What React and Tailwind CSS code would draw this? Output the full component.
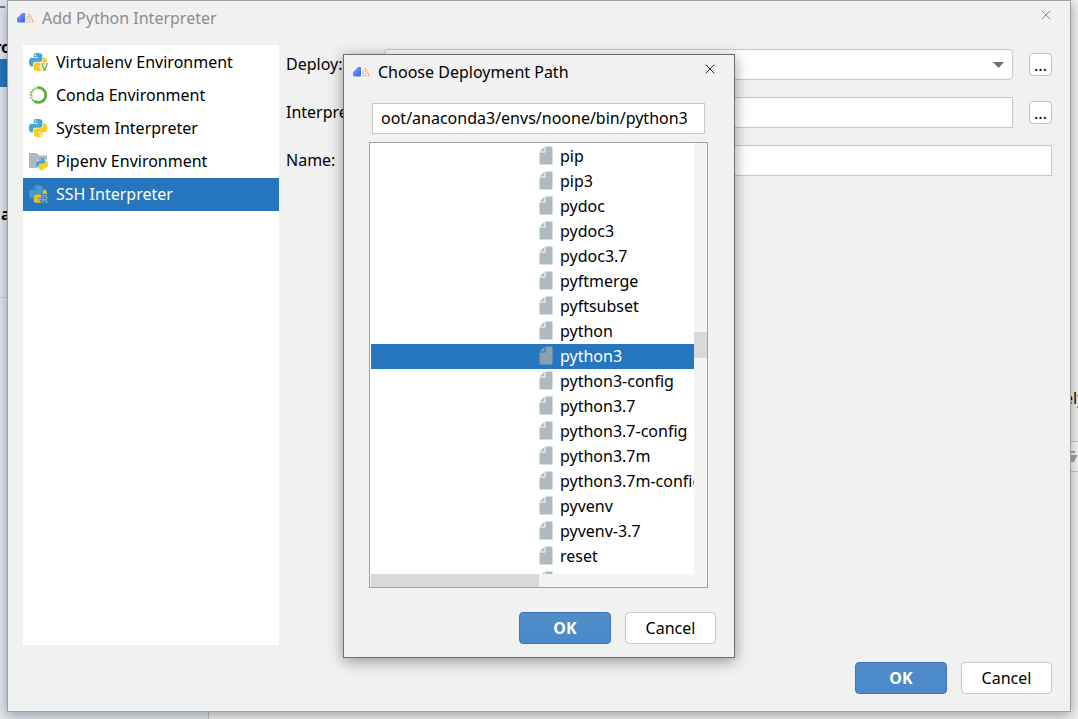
import { useState } from 'react';
import { X } from 'lucide-react';

const environments = [
    { name: 'Virtualenv Environment', icon: 'virtualenv' },
    { name: 'Conda Environment', icon: 'conda' },
    { name: 'System Interpreter', icon: 'system' },
    { name: 'Pipenv Environment', icon: 'pipenv' },
    { name: 'SSH Interpreter', icon: 'ssh' }
];

const files = [
    'pip',
    'pip3',
    'pydoc',
    'pydoc3',
    'pydoc3.7',
    'pyftmerge',
    'pyftsubset',
    'python',
    'python3',
    'python3-config',
    'python3.7',
    'python3.7-config',
    'python3.7m',
    'python3.7m-config',
    'pyvenv',
    'pyvenv-3.7',
    'reset',
    'rst2html'
];

const SNAKE_TOP = 'M14.25.18l.9.2.73.26.59.3.45.32.34.34.25.34.16.33.1.3.04.26.02.2-.01.13V8.5l-.05.63-.13.55-.21.46-.26.38-.3.31-.33.25-.35.19-.35.14-.33.1-.3.07-.26.04-.21.02H8.77l-.69.05-.59.14-.5.22-.41.27-.33.32-.27.35-.2.36-.15.37-.1.35-.07.32-.04.27-.02.21v3.06H3.17l-.21-.03-.28-.07-.32-.12-.35-.18-.36-.26-.36-.36-.35-.46-.32-.59-.28-.73-.21-.88-.14-1.05-.05-1.23.06-1.22.16-1.04.24-.87.32-.71.36-.57.4-.44.42-.33.42-.24.4-.16.36-.1.32-.05.24-.01h.16l.06.01h8.16v-.83H6.18l-.01-2.75-.02-.37.05-.34.11-.31.17-.28.25-.26.31-.23.38-.2.44-.18.51-.15.58-.12.64-.1.71-.06.77-.04.84-.02 1.27.05zm-6.3 1.98l-.23.33-.08.41.08.41.23.34.33.22.41.09.41-.09.33-.22.23-.34.08-.41-.08-.41-.23-.33-.33-.22-.41-.09-.41.09z';
const SNAKE_BOTTOM = 'M21.04 6.11l.28.06.32.12.35.18.36.27.36.35.35.47.32.59.28.73.21.88.14 1.04.05 1.23-.06 1.23-.16 1.04-.24.86-.32.71-.36.57-.4.45-.42.33-.42.24-.4.16-.36.09-.32.05-.24.02-.16-.01h-8.22v.82h5.84l.01 2.76.02.36-.05.34-.11.31-.17.29-.25.25-.31.24-.38.2-.44.17-.51.15-.58.13-.64.09-.71.07-.77.04-.84.01-1.27-.04-1.07-.14-.9-.2-.73-.25-.59-.3-.45-.33-.34-.34-.25-.34-.16-.33-.1-.3-.04-.25-.02-.2.01-.13v-5.34l.05-.64.13-.54.21-.46.26-.38.3-.32.33-.24.35-.2.35-.14.33-.1.3-.06.26-.04.21-.02.13-.01h5.84l.69-.05.59-.14.5-.21.41-.28.33-.32.27-.35.2-.36.15-.36.1-.35.07-.32.04-.28.02-.21V6.07h2.09l.14.01zm-6.47 14.25l-.23.33-.08.41.08.41.23.33.33.23.41.08.41-.08.33-.23.23-.33.08-.41-.08-.41-.23-.33-.33-.23-.41-.08-.41.08z';

const Snakes = ({ x = 0, y = 0, size = 18 }) => (
    <svg x={x} y={y} width={size} height={size} viewBox="0 0 24 24">
        <path d={SNAKE_TOP} fill="#4ba3d0" />
        <path d={SNAKE_BOTTOM} fill="#ffcb13" />
    </svg>
);

const EnvIcon = ({ type, selected }) => {
    if (type === 'conda') {
        return (
            <svg width="20" height="20" viewBox="0 0 20 20" fill="none" aria-hidden="true">
                <path d="M9 2.6A7.4 7.4 0 1 1 5 16" stroke="#5fb041" strokeWidth="2.8" />
                <path d="M9 2.6A7.4 7.4 0 0 0 5 16" stroke="#5fb041" strokeWidth="2.2" strokeDasharray="1.5 1.1" />
                <path d="M8.5 4.6A5.4 5.4 0 0 0 4.5 13" stroke="#a9d696" strokeWidth="1" strokeDasharray="1 1.4" />
            </svg>
        );
    }

    if (type === 'pipenv') {
        return (
            <svg width="20" height="20" viewBox="0 0 20 20" aria-hidden="true">
                <path d="M0 2h7.5l2.5 2.5H18V17H0z" fill="#aeb9c0" />
                <circle cx="13" cy="13" r="6" fill="#fff" opacity="0.6" />
                <Snakes x={7} y={7} size={12} />
            </svg>
        );
    }

    return (
        <svg width="20" height="20" viewBox="0 0 20 20" aria-hidden="true" className="overflow-visible font-['Open_Sans',sans-serif]">
            <g opacity={selected ? 0.85 : 1}>
                <Snakes x={0} y={1} size={18} />
            </g>
            {type === 'virtualenv' && (
                <text x="12" y="19" fontSize="11" fontWeight="600" fill="#5fb041" stroke="#fff" strokeWidth="2" paintOrder="stroke">V</text>
            )}
            {type === 'ssh' && (
                <text x="12" y="19" fontSize="11" fontWeight="600" fill="#90a9bd" stroke="#2675bf" strokeWidth="2" paintOrder="stroke">R</text>
            )}
        </svg>
    );
};

const AppLogo = () => (
    <svg width="17" height="12" viewBox="0 0 17 12" aria-hidden="true">
        <defs>
            <linearGradient id="hill" x1="0" y1="0" x2="1" y2="1">
                <stop offset="0" stopColor="#86a4f5" />
                <stop offset="1" stopColor="#2f62ee" />
            </linearGradient>
        </defs>
        <path d="M0 9.500V6L2.500 4 4 1.800 6 1H8V9.500L7 10.500H1z" fill="url(#hill)" />
        <path
            d="M11 2h2v1.300h-2zM13 3.400h1.300v1.300H13zM9.500 4h1.300v1.300H9.500zM11.700 4.700h1.300V6h-1.300zM14 5.400h1.300v1.300H14zM9.300 6.600h1.500v1.300H9.300zM12 7h1.300v1.300H12zM14.900 7.600h1.400v1.300h-1.400zM9.600 9h1.300v1.300H9.600zM12 9.200h1.600v1.200H12zM14.900 9.600h1.400v1h-1.400z"
            fill="#f8a552"
        />
    </svg>
);

const FileIcon = ({ selected }) => (
    <svg width="14" height="19" viewBox="0 0 14 19" aria-hidden="true" className={selected ? 'text-[#8a9fb0]' : 'text-[#aeb9c0]'}>
        <path d="M6.500.5H13.500V18.500H.500V6.500H6.500z" fill="currentColor" />
        <path d="M5.500.8V5.500H.700z" fill="currentColor" />
    </svg>
);

const TitleBar = ({ title, inactive = false }) => (
    <header className="flex h-9 items-center pr-2 pb-0.5 pl-[9px]">
        <AppLogo />
        <h2 className={`ml-2 flex-1 ${inactive ? 'text-[#8c8c8c]' : 'text-black'}`}>{title}</h2>
        <button type="button" aria-label="Close" className={`mr-1 mb-1.5 p-1 ${inactive ? 'text-[#8c8c8c]' : 'text-[#222]'}`}>
            <X size={16} strokeWidth={1.5} />
        </button>
    </header>
);

const DialogButtons = () => (
    <div className="flex justify-end gap-[14px]">
        <button type="button" className="h-8 w-[92px] rounded border border-[#3a75b8] bg-linear-to-b from-[#528cc7] to-[#4989cc] font-bold text-white">
            OK
        </button>
        <button type="button" className="h-8 w-[91px] rounded border border-[#c8c8c8] bg-white">
            Cancel
        </button>
    </div>
);

const BrowseButton = ({ label }) => (
    <button type="button" aria-label={label} className="ml-4 flex h-[23px] w-[23px] items-center justify-center rounded border border-[#c4c4c4] bg-white leading-4">
        ...
    </button>
);

// IDE window that stays behind the dialogs
const Backdrop = () => (
    <div className="flex h-full">
        <div className="flex w-[209px] flex-col border-r border-[#c4c4c4] bg-[#e2e8ee] font-bold">
            <div className="mt-1.5 h-0.5 w-[5px] bg-[#777]" />
            <div className="mt-7 h-[22px] w-[11px] overflow-hidden">
                <span className="float-right">ro</span>
            </div>
            <div className="mt-px h-7 bg-[#2675bf]" />
            <div className="mt-[116px] h-[22px] pl-px">a</div>
            <div className="mt-[72px] border-t border-[#ccd2d8]" />
        </div>
        <div className="flex flex-1 flex-col items-end bg-[#f0f0f0] pt-[387px]">
            <div className="h-[22px] w-[14px] overflow-hidden">ely</div>
            <div className="mt-8 flex h-[31px] w-full items-center justify-end border-y border-[#c4c4c4] bg-[#f7f7f7]">
                <svg width="10" height="14" viewBox="0 0 10 14" fill="#9da7ad" aria-hidden="true">
                    <path d="M0 1h7v2H0zM0 5h9.500L6 12H0z" />
                </svg>
            </div>
        </div>
    </div>
);

const ChoosePathDialog = () => {
    const [selectedFile, setSelectedFile] = useState('python3');
    const [path, setPath] = useState('oot/anaconda3/envs/noone/bin/python3');

    return (
        <section
            role="dialog"
            aria-label="Choose Deployment Path"
            className="absolute top-[54px] left-[343px] flex h-[604px] w-[392px] flex-col border border-[#6e6e6e] bg-[#f1f1f1] shadow-[0_3px_14px_rgba(0,0,0,0.4)]"
        >
            <TitleBar title="Choose Deployment Path" />
            <div className="flex min-h-0 flex-1 flex-col pt-3 pr-[26px] pl-[25px]">
                <input
                    aria-label="Path"
                    value={path}
                    onChange={(e) => setPath(e.target.value)}
                    className="mx-[3px] h-[31px] border border-[#c8c8c8] bg-white px-2 pb-0.5 outline-none"
                />

                {/* File tree */}
                <div className="mt-2 flex h-[446px] flex-col border border-[#a0a0a0] bg-white">
                    <div className="flex min-h-0 flex-1">
                        <ul className="flex-1 overflow-hidden pt-px pl-px">
                            {files.map((file) => (
                                <li key={file}>
                                    <button
                                        type="button"
                                        onClick={() => setSelectedFile(file)}
                                        className={`flex h-[25px] w-full items-center gap-[7px] pb-0.5 pl-[168px] text-left whitespace-nowrap ${file === selectedFile ? 'bg-[#2675bf] text-white' : ''}`}
                                    >
                                        <span className="shrink-0">
                                            <FileIcon selected={file === selectedFile} />
                                        </span>
                                        {file}
                                    </button>
                                </li>
                            ))}
                        </ul>
                        <div className="w-[13px] bg-[#f4f4f4] pt-[189px]">
                            <div className="h-[26px] bg-[#d9d9d9]" />
                        </div>
                    </div>
                    <div className="h-[13px] bg-[#f4f4f4] pl-px">
                        <div className="h-full w-1/2 bg-[#d9d9d9]" />
                    </div>
                </div>
            </div>
            <div className="px-[18px] pb-[13px]">
                <DialogButtons />
            </div>
        </section>
    );
};

const App = () => {
    const [selectedEnv, setSelectedEnv] = useState('SSH Interpreter');

    return (
        <main className="relative h-screen overflow-hidden font-['Noto_Sans',sans-serif] text-base leading-[22px] text-black">
            <Backdrop />

            <section
                role="dialog"
                aria-label="Add Python Interpreter"
                className="absolute inset-x-[7px] top-0 bottom-[7px] flex flex-col border border-[#a0a0a0] bg-[#f1f1f1] shadow-[0_3px_12px_rgba(0,0,0,0.35)]"
            >
                <TitleBar title="Add Python Interpreter" inactive />

                <div className="flex min-h-0 flex-1 gap-[7px] pt-2 pr-[18px] pl-[15px]">
                    <ul className="w-64 bg-white pt-px">
                        {environments.map((env) => (
                            <li key={env.name}>
                                <button
                                    type="button"
                                    onClick={() => setSelectedEnv(env.name)}
                                    className={`flex h-[33px] w-full items-center gap-[7px] pb-0.5 pl-[6px] text-left ${env.name === selectedEnv ? 'bg-[#2675bf] text-white' : ''}`}
                                >
                                    <EnvIcon type={env.icon} selected={env.name === selectedEnv} />
                                    {env.name}
                                </button>
                            </li>
                        ))}
                    </ul>

                    <form className="flex flex-1 flex-col gap-[17px] pt-1">
                        <div className="flex h-[31px] items-center">
                            <label htmlFor="deploy" className="w-[98px] pb-0.5">Deploy:</label>
                            <div className="relative h-full flex-1">
                                <select id="deploy" className="h-full w-full appearance-none rounded border border-[#c8c8c8] bg-white px-2" />
                                <svg width="11" height="6" viewBox="0 0 11 6" fill="#6e6e6e" className="absolute top-[13px] right-[9px]" aria-hidden="true">
                                    <path d="M0 0h11L5.500 6z" />
                                </svg>
                            </div>
                            <BrowseButton label="Browse deployments" />
                        </div>
                        <div className="flex h-[31px] items-center">
                            <label htmlFor="interpreter" className="w-[98px] pb-0.5">Interpreter:</label>
                            <input id="interpreter" className="h-full flex-1 border border-[#c8c8c8] bg-white px-2" />
                            <BrowseButton label="Browse interpreters" />
                        </div>
                        <div className="flex h-[31px] items-center">
                            <label htmlFor="name" className="w-[98px] pb-0.5">Name:</label>
                            <input id="name" className="h-full flex-1 border border-[#c8c8c8] bg-white px-2" />
                        </div>
                    </form>
                </div>

                <div className="px-[18px] pt-[17px] pb-[17px]">
                    <DialogButtons />
                </div>
            </section>

            <ChoosePathDialog />
        </main>
    );
};

export default App;
